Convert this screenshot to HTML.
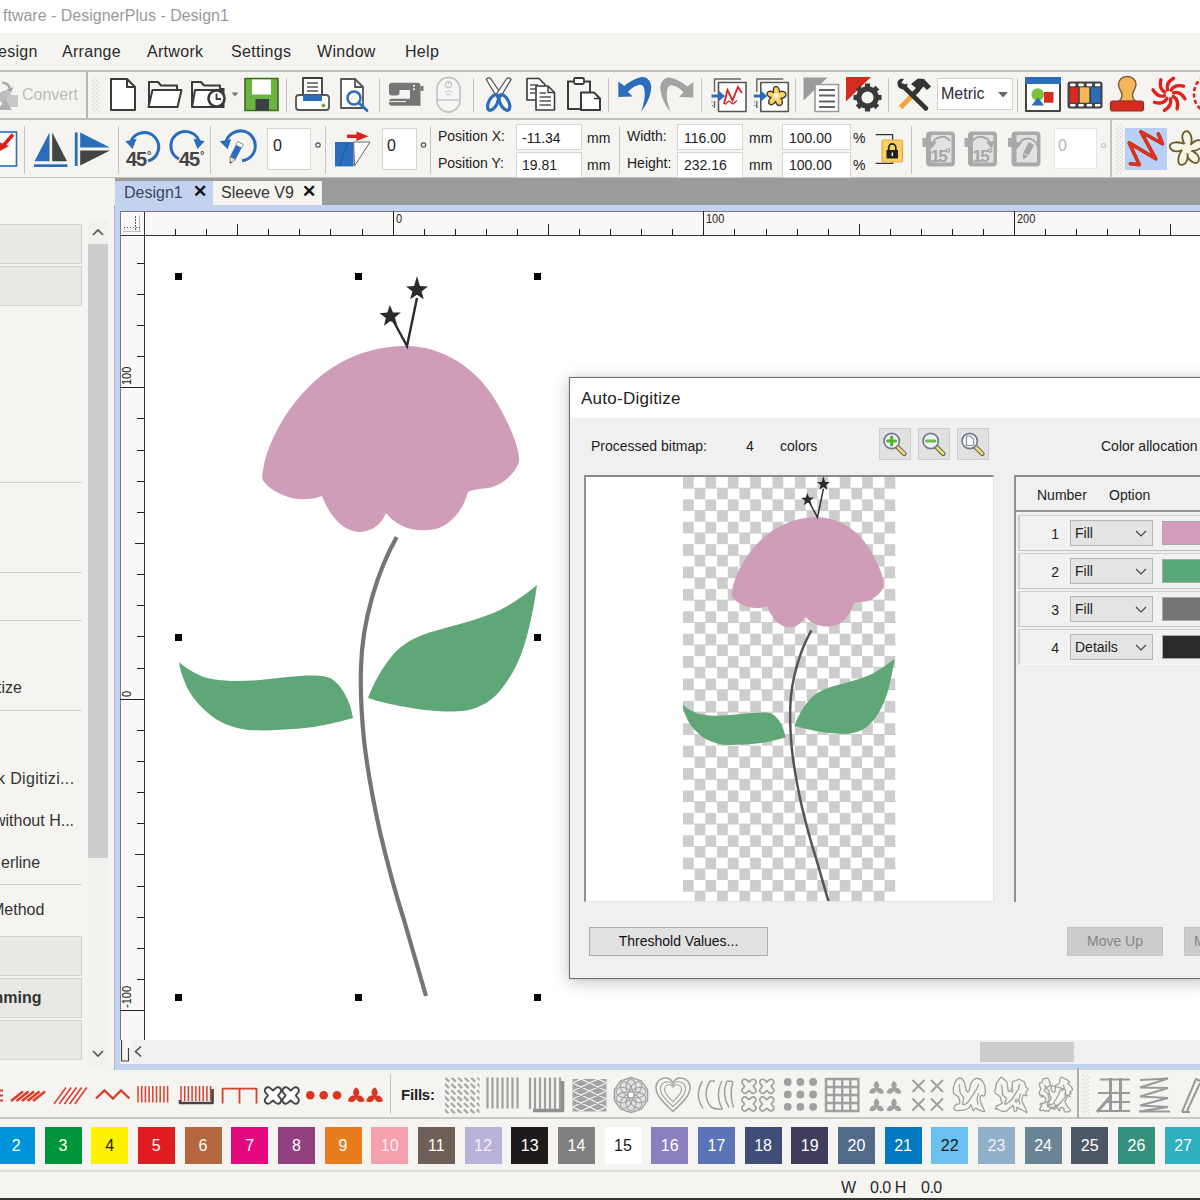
<!DOCTYPE html>
<html><head><meta charset="utf-8">
<style>
*{box-sizing:border-box;margin:0;padding:0}
html,body{width:1200px;height:1200px;overflow:hidden;background:#f5f4f1;font-family:"Liberation Sans",sans-serif;color:#222}
.a{position:absolute}
.t{position:absolute;white-space:nowrap;line-height:1}
#title{left:0;top:0;width:1200px;height:33px;background:#fff}
#menu{left:0;top:33px;width:1200px;height:37px;background:#f5f4f1}
#tb1{left:0;top:70px;width:1200px;height:48px;background:#f5f4f1;border-top:2px solid #c0bfbd}
#tb2{left:0;top:118px;width:1200px;height:60px;background:#f5f4f1;border-top:2px solid #c0bfbd;border-bottom:1.5px solid #c4c3c1}
.vs{position:absolute;width:1px;background:#c4c3c1}
.inp{position:absolute;background:#fff;border:1px solid #d5d5d5}
.lbl{position:absolute;white-space:nowrap;font-size:14px;line-height:1;color:#222}
#left{left:0;top:178px;width:115px;height:890px;background:#f5f4f1}
.gbox{position:absolute;left:0;width:82px;background:#e9e8e5;border:1px solid #d4d3d0;border-left:none}
.hl{position:absolute;left:0;width:82px;height:1px;background:#d0cfcc}
.lt{position:absolute;white-space:nowrap;font-size:16px;line-height:1;color:#333}
#tabs{left:115px;top:178px;width:1085px;height:27px;background:#9b9b9b}
#frame{left:114px;top:205px;width:1086px;height:865px;background:#c3d3ef;border-left:1px solid #a9b8d6}
#canvas{left:145px;top:236px;width:1055px;height:804px;background:#fff}
.hd{position:absolute;width:7px;height:7px;background:#000}
.sw{position:absolute;top:1127px;width:37px;height:37px;color:#fff;font-size:16px;text-align:center;line-height:38px}
svg{position:absolute;overflow:visible}
</style></head><body>
<div id="title" class="a"><div class="t" style="left:3px;top:8px;font-size:16px;color:#9a9a9a">ftware - DesignerPlus - Design1</div></div>
<div id="menu" class="a">
<div class="t" style="left:-2px;top:11px;font-size:16px;color:#2a2a2a;letter-spacing:.3px">esign</div>
<div class="t" style="left:62px;top:11px;font-size:16px;color:#2a2a2a;letter-spacing:.3px">Arrange</div>
<div class="t" style="left:147px;top:11px;font-size:16px;color:#2a2a2a;letter-spacing:.3px">Artwork</div>
<div class="t" style="left:231px;top:11px;font-size:16px;color:#2a2a2a;letter-spacing:.3px">Settings</div>
<div class="t" style="left:317px;top:11px;font-size:16px;color:#2a2a2a;letter-spacing:.3px">Window</div>
<div class="t" style="left:405px;top:11px;font-size:16px;color:#2a2a2a;letter-spacing:.3px">Help</div>
</div>
<div id="tb1" class="a"></div>
<div class="t" style="left:22px;top:87px;font-size:16px;color:#bcbcbc">Convert</div>
<div class="vs" style="left:86px;top:72px;height:46px;width:2px;background:#b8b7b5"></div>
<div class="vs" style="left:286px;top:78px;height:34px"></div>
<div class="vs" style="left:379px;top:78px;height:34px"></div>
<div class="vs" style="left:473px;top:78px;height:34px"></div>
<div class="vs" style="left:608px;top:78px;height:34px"></div>
<div class="vs" style="left:701px;top:78px;height:34px"></div>
<div class="vs" style="left:795px;top:78px;height:34px"></div>
<div class="vs" style="left:888px;top:78px;height:34px"></div>
<div class="vs" style="left:1017px;top:78px;height:34px"></div>
<div class="a" style="left:937px;top:78px;width:76px;height:32px;background:#fff;border:1px solid #d0d0d0"></div>
<div class="t" style="left:941px;top:86px;font-size:16px;color:#2a2a3a">Metric</div>
<svg style="left:0;top:0" width="1200" height="1200" fill="none" stroke-linejoin="round">
<defs><pattern id="grip" width="4" height="4" patternUnits="userSpaceOnUse"><rect x="0" y="0" width="1.2" height="1.2" fill="#d2d1ce"/><rect x="2" y="2" width="1.2" height="1.2" fill="#d2d1ce"/></pattern></defs>
<rect x="91" y="78" width="9" height="34" fill="url(#grip)"/>
<!-- convert (gray) -->
<g fill="#bdbdbd" stroke="none"><circle cx="5" cy="97" r="6.5"/><rect x="7" y="95" width="11" height="12" fill="#c9c9c9"/><path d="M-2 110 L5 99 L12 110 Z" fill="#b0b0b0"/><path d="M2 82 C6 81 10 84 11 88 L13.5 87 L11 93 L6 89.5 L8.5 88.8 C8 86 5 84 2 84 Z" fill="#a8a8a8"/></g>
<!-- new -->
<path d="M111 79 H127 L135 87 V110 H111 Z" fill="#fff" stroke="#3a3a3a" stroke-width="2"/><path d="M127 79 V87 H135" stroke="#3a3a3a" stroke-width="2"/>
<!-- open -->
<path d="M149 106 V82 H158 L161 85.5 H177 V90" stroke="#3a3a3a" stroke-width="2"/><path d="M152.5 90 H181.5 L177.5 107 H148.5 Z" fill="#fff" stroke="#3a3a3a" stroke-width="2"/>
<!-- recent -->
<path d="M192 107 V82 H201 L204 85.5 H220 V89" stroke="#3a3a3a" stroke-width="2"/><path d="M219 88 H224.500 V108 H219 Z" fill="#3a3a3a"/><path d="M195 90 H222 V107 H192 Z" fill="#fff" stroke="#3a3a3a" stroke-width="2"/><circle cx="216.5" cy="98.5" r="8" fill="#fff" stroke="#3a3a3a" stroke-width="2.6"/><path d="M216.5 93.5 V99 H221" stroke="#3a3a3a" stroke-width="1.8"/>
<path d="M231.5 92.5 H238.5 L235 96.5 Z" fill="#777"/>
<!-- save -->
<rect x="245" y="78.5" width="33" height="32" fill="#6cb33f" stroke="#3d6b22" stroke-width="1.6"/><rect x="252" y="79.5" width="19" height="15" fill="#fff"/><rect x="255.500" y="99" width="13.500" height="11.500" fill="#3d3d48"/>
<!-- printer -->
<path d="M303 97 V78 H322 V97" fill="#fff" stroke="#3a3a3a" stroke-width="1.8"/><path d="M307 83 H318 M307 87 H318 M307 91 H318" stroke="#555" stroke-width="1.5"/>
<rect x="296" y="95" width="33" height="15" rx="3" fill="#fff" stroke="#555" stroke-width="1.8"/><rect x="303" y="95" width="19" height="6" fill="#2a6ebb"/><circle cx="323.5" cy="105.5" r="2" fill="#6cb33f"/>
<!-- preview -->
<path d="M341 79 H355 L363 87 V108 H341 Z" fill="#fff" stroke="#555" stroke-width="1.8"/><path d="M355 79 V87 H363" stroke="#555" stroke-width="1.8"/><circle cx="354" cy="98" r="6.5" fill="#fff" stroke="#2a6ebb" stroke-width="2.5"/><path d="M359 103 L367 110.5" stroke="#2a6ebb" stroke-width="3" stroke-linecap="round"/>
<!-- sewing machine -->
<g fill="#767676" stroke="none"><path d="M389 85.500 Q389 82.700 392 82.700 H417.500 Q420.500 82.700 420.500 85.500 V105.700 H410 V90 H399.500 V92.500 Q399.500 95.500 396.500 95.500 H392 Q389 95.500 389 92.500 Z"/><path d="M389 101.500 Q389 98.800 392 98.800 H410 V105.700 H392 Q389 105.700 389 103.300 Z"/><rect x="420.500" y="86" width="3" height="5"/></g><path d="M389 101.600 H406" stroke="#f5f4f1" stroke-width="1"/><circle cx="414" cy="85.800" r="1" fill="#fff"/><circle cx="414" cy="89.300" r="1" fill="#fff"/>
<!-- mouse -->
<rect x="437" y="77.500" width="23" height="34.500" rx="11.500" stroke="#c6c6c6" stroke-width="1.800" fill="#f6f6f5"/><path d="M437 100 H460" stroke="#c6c6c6" stroke-width="1.500"/><circle cx="448.500" cy="84.500" r="3" stroke="#cacaca" stroke-width="1.300"/><path d="M448.500 81 V84.500" stroke="#cacaca" stroke-width="1.200"/><path d="M445 92.500 Q448.500 89.500 452 92.500 M446.500 95 Q448.500 93.500 450.500 95" stroke="#c4c4c4" stroke-width="1.200"/>
<!-- scissors -->
<path d="M486.300 79.500 Q488.500 76.500 491 79 L502 95.500 L497.500 98 Z" fill="#fff" stroke="#555" stroke-width="1.3"/>
<path d="M511.100 79.500 Q508.900 76.500 506.400 79 L495.400 95.500 L499.900 98 Z" fill="#fff" stroke="#555" stroke-width="1.3"/>
<ellipse cx="493" cy="102.500" rx="4.200" ry="8.500" transform="rotate(28 493 102.500)" stroke="#2a6ebb" stroke-width="3.2"/><ellipse cx="504.400" cy="102.500" rx="4.200" ry="8.500" transform="rotate(-28 504.400 102.500)" stroke="#2a6ebb" stroke-width="3.2"/>
<!-- copy -->
<path d="M527 78.500 H539 L545 84.500 V100 H527 Z" fill="#fff" stroke="#3a3a3a" stroke-width="1.6"/><path d="M530 85 H538 M530 89 H541 M530 93 H535" stroke="#555" stroke-width="1.4"/>
<path d="M536 86 H548 L554.500 92.500 V110 H536 Z" fill="#fff" stroke="#3a3a3a" stroke-width="1.6"/><path d="M548 86 V92.500 H554.500" stroke="#3a3a3a" stroke-width="1.4"/><path d="M539.500 93 H546 M539.500 97 H551 M539.500 101 H551 M539.500 105 H551" stroke="#555" stroke-width="1.4"/>
<!-- paste -->
<path d="M574 81.500 H568 V109 H581" stroke="#3a3a3a" stroke-width="2"/><path d="M584 81.500 H590 V92" stroke="#3a3a3a" stroke-width="2"/><rect x="574" y="78" width="10" height="6" rx="1.500" fill="#fff" stroke="#3a3a3a" stroke-width="1.8"/>
<path d="M581 92.500 H594 L600 98.500 V110 H581 Z" fill="#fff" stroke="#3a3a3a" stroke-width="2"/><path d="M594 98.500 H600" stroke="#3a3a3a" stroke-width="1.6"/>
<!-- undo -->
<path d="M618.300 81.600 L624.300 86.100 C628.800 82 635.500 78.300 642.300 77.100 C647.500 77 651.300 82 651.300 87.300 C651 96.300 646 105.300 641.100 112 C644 103 646 94.800 644 88 C643 85 641 84.300 638 85.200 C634.800 85.800 631 88.500 628 91.800 L632.500 96.600 L618.300 97 Z" fill="#2a6ebb"/>
<!-- redo -->
<path d="M618.300 81.600 L624.300 86.100 C628.800 82 635.500 78.300 642.300 77.100 C647.500 77 651.300 82 651.300 87.300 C651 96.300 646 105.300 641.100 112 C644 103 646 94.800 644 88 C643 85 641 84.300 638 85.200 C634.800 85.800 631 88.500 628 91.800 L632.500 96.600 L618.300 97 Z" fill="#a3a3a3" transform="translate(1311.600 0.500) scale(-1 1)"/>
<!-- import stitch -->
<g id="impf"><path d="M714.500 92 V79 H741" stroke="#666" stroke-width="1.4"/><path d="M714.500 101 V108" stroke="#666" stroke-width="1.4"/><rect x="718.500" y="82.500" width="27.500" height="29" fill="#fff" stroke="#555" stroke-width="1.6"/><path d="M711.500 96 H720" stroke="#2a6ebb" stroke-width="3"/><path d="M718.500 90.500 L725 96 L718.500 101.500 Z" fill="#2a6ebb"/><path d="M712 101.500 v1 M712.500 105 v1" stroke="#2a6ebb" stroke-width="1.2"/></g>
<path d="M724 104 L727.500 90 L732.500 100.500 L738 87 L742 93" stroke="#d8231c" stroke-width="1.8" stroke-linejoin="miter"/>
<path d="M725 104.500 L729 101 L733 104 L737 100.500" stroke="#d8231c" stroke-width="1.2"/>
<use href="#impf" x="42.300"/>
<path d="M775.700 86.500 C778.500 86.500 779.500 90 779.500 92 C782 90.500 786 91.500 786 94.500 C786 97.500 782.500 98.500 781 98.500 C783 101 783 105 780 105.500 C777.500 106 776 103 775.500 101.500 C774.500 103.500 771.500 106 769.500 104 C767.500 102 769.500 98.500 771 97.500 C768.500 97 766 94.500 767.500 92.500 C769 90.500 772 91.500 773.500 92.500 C773 90 773.500 86.500 775.700 86.500 Z" fill="#f6d36b" stroke="#4a3a20" stroke-width="1.4"/><circle cx="776" cy="96" r="2.500" fill="#fff7d8"/>
<!-- gray tri + list -->
<path d="M803.500 77.500 H827.500 L803.500 100.500 Z" fill="#9c9c9c"/><rect x="815" y="84.500" width="23.500" height="27" fill="#fff" stroke="#9a9a9a" stroke-width="1.6"/><path d="M819 90 H835 M819 95.500 H835 M819 101.500 H835 M819 107 H835" stroke="#666" stroke-width="2.2"/>
<!-- red tri + gear -->
<path d="M846 77 H871 L846 101.500 Z" fill="#d62b1f"/>
<g transform="translate(867.500 97.500)"><circle r="8.700" stroke="#3a3a3a" stroke-width="5.200" fill="none"/><g fill="#3a3a3a"><rect x="-2.600" y="-14" width="5.200" height="5"/><rect x="-2.600" y="9" width="5.200" height="5"/><rect x="-14" y="-2.600" width="5" height="5.200"/><rect x="9" y="-2.600" width="5" height="5.200"/><g transform="rotate(45)"><rect x="-2.600" y="-14" width="5.200" height="5"/><rect x="-2.600" y="9" width="5.200" height="5"/><rect x="-14" y="-2.600" width="5" height="5.200"/><rect x="9" y="-2.600" width="5" height="5.200"/></g></g></g>
<!-- tools -->
<path d="M900.500 107.500 L915 93" stroke="#f0a63c" stroke-width="5" stroke-linecap="butt"/>
<path d="M912 95.500 L918.500 89" stroke="#333" stroke-width="5"/>
<path d="M911 84 L918 78.500 L924 79 L931 86.500 L927 90 L923.500 86.500 L919.500 91 Z" fill="#333"/>
<path d="M903 86 L926 108.500" stroke="#333" stroke-width="4.600" stroke-linecap="round"/>
<path d="M897.500 84 C897 80 900.500 78 904 79 L901.500 82.500 L903.500 85 L907.500 83.500 C908 87 905 90 901.500 89 C899 88.500 897.700 86.500 897.500 84 Z" fill="#333"/>
<!-- metric arrow -->
<path d="M998 92 H1008 L1003 97.500 Z" fill="#666"/>
<!-- window icon -->
<rect x="1026" y="78" width="34" height="33" fill="#fff" stroke="#444" stroke-width="2"/><rect x="1025" y="77" width="36" height="7" fill="#2a6ebb"/>
<circle cx="1037.700" cy="94.500" r="6.300" fill="#7dc142"/><rect x="1044" y="92" width="9.500" height="10.700" fill="#d62b1f"/><path d="M1031.400 105.600 H1044 L1038 97.500 Z" fill="#2a6ebb"/>
<!-- film -->
<rect x="1067.500" y="81.500" width="35" height="27" rx="2.500" fill="#444"/>
<rect x="1069.800" y="87.400" width="8.400" height="15.300" fill="#d62b1f"/><rect x="1079.800" y="87.400" width="9.400" height="15.300" fill="#f5b75a"/><rect x="1091.300" y="87.400" width="9.200" height="15.300" fill="#2a6ebb"/>
<g fill="#fff"><rect x="1070" y="83.500" width="5.500" height="2.700" rx="1"/><rect x="1078.300" y="83.500" width="5.500" height="2.700" rx="1"/><rect x="1086.600" y="83.500" width="5.500" height="2.700" rx="1"/><rect x="1094.900" y="83.500" width="5.500" height="2.700" rx="1"/><rect x="1070" y="103.900" width="5.500" height="2.700" rx="1"/><rect x="1078.300" y="103.900" width="5.500" height="2.700" rx="1"/><rect x="1086.600" y="103.900" width="5.500" height="2.700" rx="1"/><rect x="1094.900" y="103.900" width="5.500" height="2.700" rx="1"/></g>
<!-- stamp -->
<path d="M1127.200 76.500 C1133 76.500 1136 80.500 1136 84.500 C1136 89 1132.500 91 1132.500 95 C1132.500 98 1134 100 1136 101.500 H1118.500 C1120.500 100 1122 98 1122 95 C1122 91 1118.500 89 1118.500 84.500 C1118.500 80.500 1121.500 76.500 1127.200 76.500 Z" fill="#f5b75a" stroke="#7a5a30" stroke-width="1.400"/>
<rect x="1110.500" y="101" width="33" height="10" rx="2.500" fill="#d62b1f" stroke="#8a3022" stroke-width="1.200"/>
<!-- swirl -->
<g transform="translate(1169 94.300)" stroke="#e0201c" stroke-width="3.400" stroke-linecap="round" fill="none">
<path id="arm" d="M-1.500 -4.500 C-2.500 -8.500 -0.500 -13 4.500 -16"/><use href="#arm" transform="rotate(45)"/><use href="#arm" transform="rotate(90)"/><use href="#arm" transform="rotate(135)"/><use href="#arm" transform="rotate(180)"/><use href="#arm" transform="rotate(225)"/><use href="#arm" transform="rotate(270)"/><use href="#arm" transform="rotate(315)"/></g>
<ellipse cx="1205" cy="94" rx="11" ry="16" stroke="#e0201c" stroke-width="2.600" stroke-dasharray="4 2.500"/>
</svg>
<div id="tb2" class="a"></div>
<div class="vs" style="left:24px;top:126px;height:48px"></div>
<div class="vs" style="left:118px;top:126px;height:48px"></div>
<div class="vs" style="left:210px;top:126px;height:48px"></div>
<div class="vs" style="left:325px;top:126px;height:48px"></div>
<div class="vs" style="left:430px;top:126px;height:48px"></div>
<div class="vs" style="left:619px;top:126px;height:48px"></div>
<div class="vs" style="left:911px;top:126px;height:48px"></div>
<div class="vs" style="left:1110px;top:120px;height:58px;width:2px"></div>
<div class="inp" style="left:267px;top:128px;width:44px;height:42px"></div><div class="t" style="left:273px;top:138px;font-size:16px;color:#222">0</div>
<div class="inp" style="left:382px;top:128px;width:35px;height:42px"></div><div class="t" style="left:387px;top:138px;font-size:16px;color:#222">0</div>
<div class="lbl" style="left:438px;top:129px">Position X:</div><div class="lbl" style="left:438px;top:156px">Position Y:</div>
<div class="inp" style="left:516px;top:124px;width:66px;height:26px"></div><div class="inp" style="left:516px;top:152px;width:66px;height:26px"></div>
<div class="lbl" style="left:522px;top:131px">-11.34</div><div class="lbl" style="left:522px;top:158px">19.81</div>
<div class="lbl" style="left:587px;top:131px">mm</div><div class="lbl" style="left:587px;top:158px">mm</div>
<div class="lbl" style="left:627px;top:129px">Width:</div><div class="lbl" style="left:627px;top:156px">Height:</div>
<div class="inp" style="left:677px;top:124px;width:66px;height:26px"></div><div class="inp" style="left:677px;top:152px;width:66px;height:26px"></div>
<div class="lbl" style="left:684px;top:131px">116.00</div><div class="lbl" style="left:684px;top:158px">232.16</div>
<div class="lbl" style="left:749px;top:131px">mm</div><div class="lbl" style="left:749px;top:158px">mm</div>
<div class="inp" style="left:782px;top:124px;width:69px;height:26px"></div><div class="inp" style="left:782px;top:152px;width:69px;height:26px"></div>
<div class="lbl" style="left:789px;top:131px">100.00</div><div class="lbl" style="left:789px;top:158px">100.00</div>
<div class="lbl" style="left:853px;top:131px">%</div><div class="lbl" style="left:853px;top:158px">%</div>
<div class="inp" style="left:1054px;top:128px;width:43px;height:41px;border-color:#e6e6e6"></div><div class="t" style="left:1058px;top:138px;font-size:16px;color:#b5b5b5">0</div>
<div class="a" style="left:1124.500px;top:127.500px;width:42.500px;height:42.500px;background:#b8d0f5"></div>
<svg style="left:0;top:0" width="1200" height="1200" fill="none">
<rect x="1115" y="124" width="8" height="50" fill="url(#grip)"/>
<!-- partial icon -->
<rect x="-5" y="132" width="21.500" height="34" fill="#fff" stroke="#2a6ebb" stroke-width="1.600"/><path d="M13 134.500 L3 146" stroke="#d8231c" stroke-width="3.500"/><path d="M-1 142 L9 146 L0 151 Z" fill="#d8231c"/>
<!-- mirror h -->
<path d="M34.500 161.200 H49.500 V132.500 Z" fill="#2a6ebb"/><path d="M52.200 132.500 V161.200 H67 Z" fill="#444"/><rect x="34" y="164.300" width="33.500" height="2.700" fill="#2a6ebb"/>
<!-- mirror v -->
<rect x="74.800" y="132.500" width="2.800" height="33.500" fill="#2a6ebb"/><path d="M80.200 132.500 V147.600 H110 Z" fill="#2a6ebb"/><path d="M80.200 150.400 H110 L80.200 165.500 Z" fill="#444"/>
<!-- rot ccw 45 -->
<path d="M131 141 A14.500 14.500 0 1 1 148 161" stroke="#2a6ebb" stroke-width="3"/><path d="M126 140 L137.500 140 L131.500 149 Z" fill="#2a6ebb" transform="rotate(-12 131.500 144)"/>
<!-- rot cw 45 -->
<path d="M199 141 A14.500 14.500 0 1 0 179 159" stroke="#2a6ebb" stroke-width="3"/><path d="M192.500 140 L204 140 L198.500 149 Z" fill="#2a6ebb" transform="rotate(12 198.500 144)"/>
<!-- rot free -->
<path d="M226 141.500 A15 15 0 1 1 242 160.800" stroke="#2a6ebb" stroke-width="3"/><path d="M220.500 140 L232 140.500 L226.500 149.500 Z" fill="#2a6ebb" transform="rotate(-12 226 144)"/>
<g transform="translate(240.500 143) rotate(27)"><rect x="-3.200" y="0" width="6.400" height="4" fill="#fff" stroke="#888" stroke-width=".8"/><rect x="-3.200" y="4" width="6.400" height="13" fill="#2a6ebb"/><path d="M-3.200 17 H3.200 L0 23 Z" fill="#f1e3c8" stroke="#777" stroke-width=".7"/><path d="M-1 21 L1 21 L0 23 Z" fill="#333"/></g>
<circle cx="318" cy="145" r="2.200" stroke="#555" stroke-width="1.200"/><circle cx="423.500" cy="145" r="2.200" stroke="#555" stroke-width="1.200"/><circle cx="1103.600" cy="145.500" r="2" stroke="#c4c4c4" stroke-width="1.100"/>
<!-- skew -->
<rect x="335" y="142" width="18.600" height="24.400" fill="#2a6ebb"/><path d="M348 142 L339.500 166" stroke="#1f56a0" stroke-width="1"/><path d="M353.600 142 H370 L354.500 166 Z" fill="#fff" stroke="#666" stroke-width="1"/><path d="M347 136.300 H358" stroke="#d8231c" stroke-width="3.500"/><path d="M356.500 131.500 L368.500 136.300 L356.500 141 Z" fill="#d8231c"/>
<!-- lock -->
<path d="M875.600 134.600 H892.600 V140 M875.600 163.400 H892.600 V161" stroke="#333" stroke-width="1.300"/><rect x="882" y="140" width="20.500" height="22" rx="1.500" fill="#fbd062" stroke="#e3ab3c" stroke-width="1.200"/><rect x="886.500" y="150" width="11.500" height="8.500" fill="#222"/><path d="M888.700 150 V147.500 A3.500 3.500 0 0 1 895.800 147.500 V150" stroke="#222" stroke-width="1.700"/><rect x="891.600" y="152.500" width="1.400" height="3.500" fill="#fff"/>
<!-- gray disabled icons -->
<g id="gbx"><path d="M930 131.500 H951 Q955 131.500 955 135.500 V162.500 Q955 166.500 951 166.500 H930 Q926 166.500 926 162.500 V147 H922.500 V138 H926 V135.500 Q926 131.500 930 131.500 Z" fill="#a9a9a9"/><rect x="931" y="135" width="20.500" height="27.500" rx="1.500" fill="#e2e2e2"/></g>
<use href="#gbx" x="42"/><use href="#gbx" x="85.500"/>
<path d="M933 145 A9 7.500 0 0 1 950 141" stroke="#a6a6a6" stroke-width="2"/><path d="M928.500 141 L937 142 L931.500 148.500 Z" fill="#a6a6a6"/>
<path d="M973 141 A9 7.500 0 0 1 990 145" stroke="#a6a6a6" stroke-width="2"/><path d="M986 142 L994.500 141 L991.500 148.500 Z" fill="#a6a6a6"/>
<path d="M1018 146 A10 9.500 0 0 1 1037.500 146" stroke="#a6a6a6" stroke-width="2"/><path d="M1013.500 142 L1022 143 L1016.500 149.500 Z" fill="#a6a6a6"/>
<g transform="translate(1031.500 143.500) rotate(28)"><rect x="-3" y="0" width="6" height="12" fill="#a6a6a6"/><path d="M-3 13 H3 L0 18 Z" fill="#a6a6a6"/></g>
<circle cx="948" cy="150.500" r="1.700" stroke="#a6a6a6" stroke-width="1.300"/><circle cx="990" cy="150.500" r="1.700" stroke="#a6a6a6" stroke-width="1.300"/>
<!-- zigzag selected -->
<path d="M1130.400 163.800 L1139.200 164.600 L1129.200 142.900 L1155.800 158.800 L1140.800 131.700 L1162.500 143.800 L1158.300 133.800" stroke="#b52a18" stroke-width="3.600" stroke-linejoin="round" stroke-linecap="round"/>
<path d="M1130.400 163.800 L1139.200 164.600 L1129.200 142.900 L1155.800 158.800 L1140.800 131.700 L1162.500 143.800 L1158.300 133.800" stroke="#e8301c" stroke-width="2.400" stroke-linejoin="round" stroke-linecap="round"/>
<!-- flower icon -->
<g transform="translate(1187 148.500)"><path id="fp" d="M0 -2 C-5 -6 -6.500 -14 -2 -17 C2.500 -19 6 -12 4 -3 Z" fill="#f8f4e4" stroke="#6b5a2e" stroke-width="1.800"/><use href="#fp" transform="rotate(72)"/><use href="#fp" transform="rotate(144)"/><use href="#fp" transform="rotate(203)"/><use href="#fp" transform="rotate(280)"/><circle r="5" fill="#f8f4e4"/></g>
</svg>
<div class="t" style="left:126px;top:148.500px;font-size:20px;font-weight:bold;color:#444;letter-spacing:-1.200px">45</div><div class="t" style="left:147px;top:149.500px;font-size:11px;font-weight:bold;color:#444">°</div>
<div class="t" style="left:179px;top:148.500px;font-size:20px;font-weight:bold;color:#444;letter-spacing:-1.200px">45</div><div class="t" style="left:200px;top:149.500px;font-size:11px;font-weight:bold;color:#444">°</div>
<div class="t" style="left:930.500px;top:148px;font-size:17px;font-weight:bold;color:#a6a6a6;letter-spacing:-1.600px">15</div>
<div class="t" style="left:972.500px;top:148px;font-size:17px;font-weight:bold;color:#a6a6a6;letter-spacing:-1.600px">15</div>
<div id="left" class="a">
<div class="gbox" style="top:46px;height:40px"></div>
<div class="gbox" style="top:88px;height:40px"></div>
<div class="hl" style="top:304px"></div>
<div class="hl" style="top:394px"></div>
<div class="hl" style="top:442px"></div>
<div class="hl" style="top:532px"></div>
<div class="hl" style="top:706px"></div>
<div class="lt" style="left:-3px;top:502px">tize</div>
<div class="lt" style="left:-3px;top:593px;letter-spacing:.35px">k Digitizi...</div>
<div class="lt" style="left:-6px;top:635px">without H...</div>
<div class="lt" style="left:1px;top:677px">erline</div>
<div class="lt" style="left:-9px;top:724px">Method</div>
<div class="gbox" style="top:758px;height:40px"></div>
<div class="gbox" style="top:800px;height:40px"></div>
<div class="lt" style="left:-11px;top:812px;font-weight:bold">mming</div>
<div class="gbox" style="top:842px;height:40px"></div>
<!-- scrollbar -->
<div class="a" style="left:88px;top:42px;width:20px;height:846px;background:#f1f0ee"></div>
<div class="a" style="left:88px;top:66px;width:20px;height:614px;background:#cdcdcd"></div>
<svg style="left:91px;top:49px" width="14" height="10"><path d="M2 8 L7 3 L12 8" fill="none" stroke="#555" stroke-width="1.6"/></svg>
<svg style="left:91px;top:871px" width="14" height="10"><path d="M2 2 L7 7 L12 2" fill="none" stroke="#555" stroke-width="1.6"/></svg>
</div>
<div id="tabs" class="a">
<div class="a" style="left:0;top:3px;width:98px;height:24px;background:#c3d3ef"></div>
<div class="a" style="left:98px;top:3px;width:109px;height:24px;background:#f6f4ef"></div>
<div class="t" style="left:9px;top:7px;font-size:16px;color:#3a4560">Design1</div>
<div class="t" style="left:78px;top:5px;font-size:17px;color:#111;font-weight:bold">✕</div>
<div class="t" style="left:106px;top:7px;font-size:16px;color:#333">Sleeve V9</div>
<div class="t" style="left:187px;top:5px;font-size:17px;color:#111;font-weight:bold">✕</div>
</div>
<div id="frame" class="a"></div>
<div id="canvas" class="a"></div>
<div class="a" style="left:120px;top:211px;width:1080px;height:25px;background:#f9f8f6"></div>
<div class="a" style="left:120px;top:211px;width:25px;height:853px;background:#f9f8f6"></div>
<svg style="left:0;top:0" width="1200" height="1200" shape-rendering="crispEdges">
<path d="M144.5 212 V1040 M120 235.5 H1200" stroke="#333" stroke-width="1.4" fill="none"/>
<path d="M120 211.5 H1200 M120.5 211 V1064" stroke="#7a7a7a" stroke-width="1" fill="none"/>
<path d="M123 231.5 H140.5 M139.5 215 V232" stroke="#bbb" stroke-width="1" fill="none"/>
<path d="M123.5 227.5 H140 M135.5 216 V231" stroke="#555" stroke-width="1" stroke-dasharray="1.5 1.5" fill="none"/>
<path d="M175.5 229.0 V235 M206.5 229.0 V235 M237.5 224.0 V235 M268.5 229.0 V235 M299.5 229.0 V235 M330.5 229.0 V235 M362.5 229.0 V235 M393.5 211.0 V235 M424.5 229.0 V235 M455.5 229.0 V235 M486.5 229.0 V235 M517.5 229.0 V235 M548.5 224.0 V235 M579.5 229.0 V235 M610.5 229.0 V235 M641.5 229.0 V235 M672.5 229.0 V235 M703.5 211.0 V235 M734.5 229.0 V235 M766.5 229.0 V235 M797.5 229.0 V235 M828.5 229.0 V235 M859.5 224.0 V235 M890.5 229.0 V235 M921.5 229.0 V235 M952.5 229.0 V235 M983.5 229.0 V235 M1014.5 211.0 V235 M1045.5 229.0 V235 M1076.5 229.0 V235 M1107.5 229.0 V235 M1139.5 229.0 V235 M1170.5 224.0 V235 " stroke="#222" stroke-width="1" fill="none"/>
<path d="M137.0 263.5 H144 M137.0 294.5 H144 M137.0 325.5 H144 M137.0 356.5 H144 M120.0 387.5 H144 M137.0 418.5 H144 M137.0 450.5 H144 M137.0 481.5 H144 M137.0 512.5 H144 M135.0 543.5 H144 M137.0 574.5 H144 M137.0 605.5 H144 M137.0 636.5 H144 M137.0 668.5 H144 M120.0 699.5 H144 M137.0 730.5 H144 M137.0 761.5 H144 M137.0 792.5 H144 M137.0 823.5 H144 M135.0 854.5 H144 M137.0 886.5 H144 M137.0 917.5 H144 M137.0 948.5 H144 M137.0 979.5 H144 M120.0 1010.5 H144 " stroke="#222" stroke-width="1" fill="none"/>
</svg>
<div class="t" style="left:396px;top:213px;font-size:11px;color:#222;transform:scaleY(1.12);transform-origin:0 0">0</div>
<div class="t" style="left:706px;top:213px;font-size:11px;color:#222;transform:scaleY(1.12);transform-origin:0 0">100</div>
<div class="t" style="left:1017px;top:213px;font-size:11px;color:#222;transform:scaleY(1.12);transform-origin:0 0">200</div>
<div class="t" style="left:120.5px;top:385px;font-size:11px;color:#222;transform-origin:0 0;transform:rotate(-90deg) scaleY(1.12)">100</div>
<div class="t" style="left:120.5px;top:697px;font-size:11px;color:#222;transform-origin:0 0;transform:rotate(-90deg) scaleY(1.12)">0</div>
<div class="t" style="left:120.5px;top:1008px;font-size:11px;color:#222;transform-origin:0 0;transform:rotate(-90deg) scaleY(1.12)">-100</div>
<svg style="left:0;top:0" width="1200" height="1200">
<defs>
<g id="fl">
<path d="M263 470 C268 436 300 380 350 358 C372 348 392 346 406 346 C440 346 478 366 500 408 C512 430 520 450 519 462 C514 476 500 486 488 488 C478 489 472 490 468 492 C462 514 446 530 428 530 C410 532 394 524 386 513 C382 524 372 532 358 532 C340 530 328 512 322 496 C312 500 300 500 292 498 C280 495 268 488 263.500 481 C261.500 478 262 474 263 470 Z" fill="#cf9db8"/>
<path d="M396.7 537 C378 570 362 620 361 668 C360 700 362 720 364 740 C368 775 374 805 380 832 C388 866 396 895 404 920 C412 948 420 975 426 996" fill="none" stroke="currentColor" stroke-width="4.2" stroke-linecap="butt"/>
<path d="M179 662 C188 670 200 677 212 679 C230 682 245 681 260 680 C280 678 300 675 316 675.5 C324 676 329 677 332 679 C342 686 350 700 353 718 C336 723 318 727 300 728.5 C282 730 264 731 248 730 C232 728 218 722 208 713 C196 703 188 692 184 680 C181 673 180 668 179 662 Z" fill="#5fa777"/>
<path d="M537 585 C526 594 514 603 500 610 C487 616 474 620 460 624 C446 628 432 631 420 636 C408 641 398 648 392 656 C382 668 374 682 368 698 C380 702 390 704 400 706 C415 709 430 711 444 711.5 C458 712 470 711 480 706 C492 701 500 692 508 680 C518 665 524 648 528 632 C532 616 535 600 537 585 Z" fill="#5fa777"/>
<path d="M417 298 L407 346 L394 322" fill="none" stroke="#2b2b2b" stroke-width="2.4" stroke-linejoin="miter"/>
<path id="st" d="M0 -14 L2.9 -3.9 L10.9 -3.6 L4.6 1.5 L6.8 9.3 L0 4.8 L-6.8 9.3 L-4.6 1.5 L-10.9 -3.6 L-2.9 -3.9 Z" fill="#2b2b2b" transform="translate(417 290)"/>
<path d="M0 -11.5 L2.9 -3.9 L10.9 -3.6 L4.6 1.5 L6.8 9.3 L0 4.8 L-6.8 9.3 L-4.6 1.5 L-10.9 -3.6 L-2.9 -3.9 Z" fill="#2b2b2b" transform="translate(390.3 316.3) rotate(-2) scale(0.98)"/>
</g>
</defs>
<use href="#fl" style="color:#757575"/>
</svg>
<div class="hd" style="left:175px;top:273px"></div><div class="hd" style="left:355px;top:273px"></div><div class="hd" style="left:534px;top:273px"></div>
<div class="hd" style="left:175px;top:634px"></div><div class="hd" style="left:534px;top:634px"></div>
<div class="hd" style="left:175px;top:994px"></div><div class="hd" style="left:355px;top:994px"></div><div class="hd" style="left:534px;top:994px"></div>
<!-- scrollbar bottom -->
<div class="a" style="left:120px;top:1040px;width:1080px;height:24px;background:#f0f0f0"></div>
<div class="a" style="left:980px;top:1042px;width:94px;height:20px;background:#cdcdcd"></div>
<div class="a" style="left:120px;top:1040px;width:12px;height:24px;background:#f6f5f1"></div>
<svg style="left:0;top:0" width="1200" height="1200"><path d="M121.5 1040 V1061 H128.5 V1048" fill="none" stroke="#444" stroke-width="1.2"/><path d="M141 1046.5 L135.5 1051.5 L141 1056.5" fill="none" stroke="#444" stroke-width="1.5"/></svg>
<!-- DIALOG -->
<div class="a" style="left:569px;top:377px;width:641px;height:602px;background:#f0f0f0;border:1px solid #707070;box-shadow:0 3px 16px rgba(0,0,0,.24), 0 0 2px rgba(0,0,0,.15)">
 <div class="a" style="left:0;top:0;width:641px;height:40px;background:#fff"></div>
 <div class="t" style="left:11px;top:12px;font-size:17px;color:#222;letter-spacing:.25px">Auto-Digitize</div>
 <div class="lbl" style="left:21px;top:61px">Processed bitmap:</div>
 <div class="lbl" style="left:176px;top:61px">4</div>
 <div class="lbl" style="left:210px;top:61px">colors</div>
 <div class="lbl" style="left:531px;top:61px">Color allocation</div>
</div>
<!-- zoom buttons -->
<div class="a zb" style="left:879px;top:428px"></div>
<div class="a zb" style="left:918px;top:428px"></div>
<div class="a zb" style="left:957px;top:428px"></div>
<style>.zb{width:32px;height:32px;background:#e1e1e1;border:1px solid #cdcdcd}
.cb{position:absolute;left:1070px;width:83px;height:26px;background:#e4e4e4;border:1px solid #b5b5b5}
.cb span{position:absolute;left:4px;top:5px;font-size:14px;line-height:1;color:#222}
.row{position:absolute;left:1018px;width:190px;height:36px;background:#f1f1f1;border-top:1px solid #d0d0d0;border-left:2px solid #cfcfcf;border-bottom:1px solid #c2c2c2}
.num{position:absolute;width:20px;left:1039px;text-align:right;font-size:14px;line-height:1;color:#222}
.cs{position:absolute;left:1162px;width:50px;height:24px;border:1px solid #a8a8a8}
.btn{position:absolute;height:29px;font-size:14px;line-height:27px;text-align:center}
</style>
<svg style="left:0;top:0" width="1200" height="1200" fill="none">
<g id="mag"><path d="M897 446.500 L904.300 453.800" stroke="#6b6440" stroke-width="4.600" stroke-linecap="round"/><path d="M897.300 446.800 L904.200 453.700" stroke="#efe08a" stroke-width="2.600" stroke-linecap="round"/><circle cx="891.700" cy="441" r="7.700" fill="#eef2fb" stroke="#767a8c" stroke-width="1.700"/></g>
<use href="#mag" x="39"/><use href="#mag" x="78"/>
<path d="M887.700 441 H895.700 M891.700 437 V445" stroke="#58b32c" stroke-width="3.200" stroke-linecap="round"/>
<path d="M926.500 441 H935" stroke="#6cbb45" stroke-width="3" stroke-linecap="round"/>
<path d="M966.500 436 H970.500 L973.500 439 V445.500 H966.500 Z" fill="#fff" stroke="#8e93a8" stroke-width="1.200"/>
</svg>
<!-- preview box -->
<div class="a" style="left:584px;top:475px;width:410px;height:427px;background:#fff;border:1px solid #8a8a8a;border-top:2px solid #8a8a8a;border-left:2px solid #909090;border-right:1px solid #e5e5e5;border-bottom:1px solid #e5e5e5;overflow:hidden">
 <div class="a" style="left:96.5px;top:0;width:213px;height:430px;background:repeating-conic-gradient(#fff 0% 25%,#cdcdcd 0% 50%) 0 0/22.4px 22.4px"></div>
 <svg style="left:-586px;top:-477px" width="1200" height="1200"><g transform="translate(682.5 476.5) scale(0.592) translate(-179 -277)"><use href="#fl" style="color:#555"/></g></svg>
</div>
<!-- list box -->
<div class="a" style="left:1014px;top:475px;width:200px;height:427px;background:#f0f0f0;border-top:2px solid #8a8a8a;border-left:2px solid #909090"></div>
<div class="lbl" style="left:1037px;top:488px">Number</div>
<div class="lbl" style="left:1109px;top:488px">Option</div>
<div class="a" style="left:1016px;top:510px;width:190px;height:2px;background:#959595"></div>
<div class="row" style="top:515px"></div><div class="row" style="top:553px"></div><div class="row" style="top:591px"></div><div class="row" style="top:629px;border-bottom:1px solid #fbfbfb"></div>
<div class="num" style="top:527px">1</div><div class="num" style="top:565px">2</div><div class="num" style="top:603px">3</div><div class="num" style="top:641px">4</div>
<div class="cb" style="top:520px"><span>Fill</span></div><div class="cb" style="top:558px"><span>Fill</span></div><div class="cb" style="top:596px"><span>Fill</span></div><div class="cb" style="top:634px"><span>Details</span></div>
<svg style="left:0;top:0" width="1200" height="1200"><path d="M1136 531 l5 5 l5 -5 M1136 569 l5 5 l5 -5 M1136 607 l5 5 l5 -5 M1136 645 l5 5 l5 -5" fill="none" stroke="#444" stroke-width="1.2"/></svg>
<div class="cs" style="top:521px;background:#d49dbb"></div><div class="cs" style="top:559px;background:#5aa878"></div><div class="cs" style="top:597px;background:#757575"></div><div class="cs" style="top:635px;background:#2a2a2a"></div>
<!-- buttons -->
<div class="btn" style="left:589px;top:927px;width:179px;background:#e1e1e1;border:1px solid #adadad;color:#111">Threshold Values...</div>
<div class="btn" style="left:1067px;top:927px;width:96px;background:#cccccc;border:1px solid #c4c4c4;color:#858585">Move Up</div>
<div class="btn" style="left:1184px;top:927px;width:96px;background:#cccccc;border:1px solid #c4c4c4;color:#858585;text-align:left;padding-left:9px">Move Down</div>
<div class="a" style="left:0;top:1070px;width:1200px;height:49px;background:#f5f4f1;border-bottom:2px solid #c9c8c6"></div>
<div class="a" style="left:0;top:1120px;width:1200px;height:52px;background:#f5f4f1;border-bottom:2px solid #dcdbd9"></div>
<div class="a" style="left:0;top:1172px;width:1200px;height:28px;background:#f5f4f1"></div>
<div class="a" style="left:0;top:1198px;width:1200px;height:2px;background:#333"></div>
<div class="sw" style="left:-2.2px;background:#0095da;color:#fff">2</div>
<div class="sw" style="left:44.5px;background:#00953b;color:#fff">3</div>
<div class="sw" style="left:91.2px;background:#fff200;color:#1a1a1a">4</div>
<div class="sw" style="left:137.8px;background:#e11b22;color:#fff">5</div>
<div class="sw" style="left:184.5px;background:#b5673f;color:#fff">6</div>
<div class="sw" style="left:231.2px;background:#e5097f;color:#fff">7</div>
<div class="sw" style="left:277.9px;background:#92407f;color:#fff">8</div>
<div class="sw" style="left:324.5px;background:#e87d1e;color:#fff">9</div>
<div class="sw" style="left:371.2px;background:#f4a0ad;color:#fbeef2">10</div>
<div class="sw" style="left:417.9px;background:#6e5f58;color:#fff">11</div>
<div class="sw" style="left:464.5px;background:#b9b3d9;color:#fbeef2">12</div>
<div class="sw" style="left:511.2px;background:#1e1a1a;color:#fff">13</div>
<div class="sw" style="left:557.9px;background:#808080;color:#fff">14</div>
<div class="sw" style="left:604.5px;background:#ffffff;color:#1a1a1a">15</div>
<div class="sw" style="left:651.2px;background:#8b7fbf;color:#fff">16</div>
<div class="sw" style="left:697.9px;background:#5b74b5;color:#fff">17</div>
<div class="sw" style="left:744.6px;background:#3f4e78;color:#fff">18</div>
<div class="sw" style="left:791.2px;background:#403c5c;color:#fff">19</div>
<div class="sw" style="left:837.9px;background:#516a8a;color:#fff">20</div>
<div class="sw" style="left:884.6px;background:#0079c1;color:#fff">21</div>
<div class="sw" style="left:931.2px;background:#6cc0f0;color:#1a1a1a">22</div>
<div class="sw" style="left:977.9px;background:#8fb0c8;color:#fbeef2">23</div>
<div class="sw" style="left:1024.6px;background:#6a8496;color:#fff">24</div>
<div class="sw" style="left:1071.2px;background:#4d5866;color:#fff">25</div>
<div class="sw" style="left:1117.9px;background:#35917e;color:#fff">26</div>
<div class="sw" style="left:1164.6px;background:#2fb0c0;color:#fff">27</div>
<div class="t" style="left:841px;top:1180px;font-size:16px;color:#2a2a2a">W</div>
<div class="t" style="left:870px;top:1180px;font-size:16px;color:#2a2a2a;letter-spacing:-0.5px">0.0 H</div>
<div class="t" style="left:921px;top:1180px;font-size:16px;color:#2a2a2a;letter-spacing:-0.5px">0.0</div>
<div class="vs" style="left:390px;top:1074px;height:40px"></div>
<div class="vs" style="left:1077px;top:1068px;height:51px;width:2px;background:#b0afad"></div>
<div class="t" style="left:401px;top:1087px;font-size:15px;font-weight:bold;color:#222;letter-spacing:-.2px">Fills:</div>
<svg style="left:0;top:1px" width="1200" height="1200" fill="none" stroke-linejoin="round">
<defs><path id="xl" d="M0 -5 L2.360 -7.010 A3.300 3.300 0 1 1 7.010 -2.360 L5 0 L7.010 2.360 A3.300 3.300 0 1 1 2.360 7.010 L0 5 L-2.360 7.010 A3.300 3.300 0 1 1 -7.010 2.360 L-5 0 L-7.010 -2.360 A3.300 3.300 0 1 1 -2.360 -7.010 Z"/>
<g id="tl"><path d="M0 -9.500 C4.200 -6 4 -2 0 0.500 C-4 -2 -4.200 -6 0 -9.500 Z"/><path d="M0 -9.500 C4.200 -6 4 -2 0 0.500 C-4 -2 -4.200 -6 0 -9.500 Z" transform="rotate(118)"/><path d="M0 -9.500 C4.200 -6 4 -2 0 0.500 C-4 -2 -4.200 -6 0 -9.500 Z" transform="rotate(-118)"/></g></defs>
<rect x="1082" y="1074" width="8" height="40" fill="url(#grip)"/>
<g stroke="#d8412f">
<path d="M-1 1089.500 H3 M-1 1094.500 H3 M-1 1099.500 H3" stroke-width="2.200"/>
<path d="M11.0 1100 L23.0 1090.500 M16.5 1100 L28.5 1090.500 M22.0 1100 L34.0 1090.500 M27.5 1100 L39.5 1090.500 M33.0 1100 L45.0 1090.500 " stroke-width="2.600"/>
<path d="M54.0 1103 L66.0 1086.500 M59.2 1103 L71.2 1086.500 M64.4 1103 L76.4 1086.500 M69.6 1103 L81.6 1086.500 M74.8 1103 L86.8 1086.500 " stroke-width="1.600"/>
<path d="M96 1097.500 L104.500 1089.500 L113 1097.500 L121 1089.500 L129.500 1097.500" stroke-width="2.400" stroke-linejoin="miter"/>
<path d="M138.0 1085 V1101.500 M141.7 1085 V1101.500 M145.4 1085 V1101.500 M149.1 1085 V1101.500 M152.8 1085 V1101.500 M156.5 1085 V1101.500 M160.2 1085 V1101.500 M163.9 1085 V1101.500 M167.6 1085 V1101.500 " stroke-width="1.500"/>
<path d="M181.0 1085 V1100 M184.7 1085 V1100 M188.4 1085 V1100 M192.1 1085 V1100 M195.8 1085 V1100 M199.5 1085 V1100 M203.2 1085 V1100 M206.9 1085 V1100 M210.6 1085 V1100 " stroke-width="1.500"/>
<path d="M222.600 1102.500 V1087.600 H256.500 V1102.500 M239.500 1087.600 V1102.500" stroke-width="1.800"/>
</g>
<path d="M180 1099 V1102 H212.500 V1088" stroke="#444" stroke-width="2.600"/>
<use href="#xl" x="273" y="1094.500" fill="#fff" stroke="#444" stroke-width="1.900"/><use href="#xl" x="290.700" y="1094.500" fill="#fff" stroke="#444" stroke-width="1.900"/>
<g fill="#d8361f"><circle cx="310.300" cy="1094.300" r="4.300"/><circle cx="323.700" cy="1094.300" r="4.300"/><circle cx="337" cy="1094.300" r="4.300"/><use href="#tl" x="356.200" y="1095.800"/><use href="#tl" x="374.600" y="1095.800"/></g>
<g stroke="#a0a0a0">
<clipPath id="c1"><rect x="445" y="1076.500" width="34.500" height="36"/></clipPath>
<g clip-path="url(#c1)"><path d="M406.0 1076.500 L442.0 1112.500 M412.5 1076.500 L448.5 1112.500 M419.0 1076.500 L455.0 1112.500 M425.5 1076.500 L461.5 1112.500 M432.0 1076.500 L468.0 1112.500 M438.5 1076.500 L474.5 1112.500 M445.0 1076.500 L481.0 1112.500 M451.5 1076.500 L487.5 1112.500 M458.0 1076.500 L494.0 1112.500 M464.5 1076.500 L500.5 1112.500 M471.0 1076.500 L507.0 1112.500 M477.5 1076.500 L513.5 1112.500 M484.0 1076.500 L520.0 1112.500 " stroke-width="2.300" stroke-dasharray="6 3" stroke="#a8a8a8"/></g>
<path d="M487.5 1076.500 V1107.500 M492.5 1076.500 V1107.500 M497.5 1076.500 V1107.500 M502.5 1076.500 V1107.500 M507.5 1076.500 V1107.500 M512.5 1076.500 V1107.500 M517.5 1076.500 V1107.500 " stroke-width="2.200"/>
<path d="M530.0 1076.500 V1108 M535.0 1076.500 V1108 M540.0 1076.500 V1108 M545.0 1076.500 V1108 M550.0 1076.500 V1108 M555.0 1076.500 V1108 M560.0 1076.500 V1108 " stroke-width="2.200"/>
<path d="M533 1109.500 H562.500 V1080" stroke-width="3.600" stroke="#909090"/>
<rect x="572.500" y="1078" width="34" height="32.500" fill="#a3a3a3" stroke="none"/>
<clipPath id="c4"><rect x="572.500" y="1078" width="34" height="32.500"/></clipPath>
<g clip-path="url(#c4)"><path d="M572.500 1074.0 L589.500 1066.0 L606.500 1074.0 M572.500 1074.0 L589.500 1082.0 L606.500 1074.0 M572.500 1082.0 L589.500 1074.0 L606.500 1082.0 M572.500 1082.0 L589.500 1090.0 L606.500 1082.0 M572.500 1090.0 L589.500 1082.0 L606.500 1090.0 M572.500 1090.0 L589.500 1098.0 L606.500 1090.0 M572.500 1098.0 L589.500 1090.0 L606.500 1098.0 M572.500 1098.0 L589.500 1106.0 L606.500 1098.0 M572.500 1106.0 L589.500 1098.0 L606.500 1106.0 M572.500 1106.0 L589.500 1114.0 L606.500 1106.0 M572.500 1114.0 L589.500 1106.0 L606.500 1114.0 M572.500 1114.0 L589.500 1122.0 L606.500 1114.0 M572.500 1122.0 L589.500 1114.0 L606.500 1122.0 M572.500 1122.0 L589.500 1130.0 L606.500 1122.0 " stroke="#f5f4f1" stroke-width="1.300"/></g>
<polygon points="647.6,1099.4 641.3,1108.2 631.0,1111.5 620.7,1108.2 614.4,1099.4 614.4,1088.6 620.7,1079.8 631.0,1076.5 641.3,1079.8 647.6,1088.6" fill="#e2e2e2" stroke-width="1.400"/>
<g transform="translate(631 1094)" stroke-width="1.100"><ellipse cx="0" cy="-8" rx="5" ry="7.500" transform="rotate(0)"/><ellipse cx="0" cy="-8" rx="5" ry="7.500" transform="rotate(36)"/><ellipse cx="0" cy="-8" rx="5" ry="7.500" transform="rotate(72)"/><ellipse cx="0" cy="-8" rx="5" ry="7.500" transform="rotate(108)"/><ellipse cx="0" cy="-8" rx="5" ry="7.500" transform="rotate(144)"/><ellipse cx="0" cy="-8" rx="5" ry="7.500" transform="rotate(180)"/><ellipse cx="0" cy="-8" rx="5" ry="7.500" transform="rotate(216)"/><ellipse cx="0" cy="-8" rx="5" ry="7.500" transform="rotate(252)"/><ellipse cx="0" cy="-8" rx="5" ry="7.500" transform="rotate(288)"/><ellipse cx="0" cy="-8" rx="5" ry="7.500" transform="rotate(324)"/><circle r="3" fill="#fff"/></g>
<g stroke-width="1.500"><path id="hrt" d="M673 1110.500 C664 1102 656 1095 656 1086.500 C656 1080.500 660.500 1077 665.500 1077 C669 1077 671.500 1079 673 1082 C674.500 1079 677 1077 680.500 1077 C685.500 1077 690 1080.500 690 1086.500 C690 1095 682 1102 673 1110.500 Z"/><use href="#hrt" transform="translate(673 1091.800) scale(.74) translate(-673 -1092)"/><use href="#hrt" transform="translate(673 1091.300) scale(.5) translate(-673 -1092)" stroke-width="2.200"/></g>
<path d="M702.500 1080 C697 1089 697.500 1099 703 1107.500 M710 1080 C704.500 1089 705 1099 711 1106 C715 1108.500 719 1108.500 722.500 1108 M722 1080 C716.500 1090 718 1101 722.500 1108 M710 1080 H715 M727 1080 C723 1089 724 1098 729 1106.500 M733 1080.500 C730 1090 731 1099 733.500 1106.500 M727 1080 L733 1080.500" stroke-width="1.500"/>
<use href="#xl" x="749" y="1085.3" stroke-width="2" transform="translate(749 1085.3) scale(.86) translate(-749 -1085.3)"/>
<use href="#xl" x="766.8" y="1085.3" stroke-width="2" transform="translate(766.8 1085.3) scale(.86) translate(-766.8 -1085.3)"/>
<use href="#xl" x="749" y="1103" stroke-width="2" transform="translate(749 1103) scale(.86) translate(-749 -1103)"/>
<use href="#xl" x="766.8" y="1103" stroke-width="2" transform="translate(766.8 1103) scale(.86) translate(-766.8 -1103)"/>
</g>
<g fill="#a0a0a0">
<circle cx="787.7" cy="1081.0" r="3.900"/>
<circle cx="800.4" cy="1081.0" r="3.900"/>
<circle cx="813.1" cy="1081.0" r="3.900"/>
<circle cx="787.7" cy="1093.4" r="3.900"/>
<circle cx="800.4" cy="1093.4" r="3.900"/>
<circle cx="813.1" cy="1093.4" r="3.900"/>
<circle cx="787.7" cy="1105.8" r="3.900"/>
<circle cx="800.4" cy="1105.8" r="3.900"/>
<circle cx="813.1" cy="1105.8" r="3.900"/>
<use href="#tl" transform="translate(876.5 1088) scale(.88)"/>
<use href="#tl" transform="translate(894 1088) scale(.88)"/>
<use href="#tl" transform="translate(876.5 1105.5) scale(.88)"/>
<use href="#tl" transform="translate(894 1105.5) scale(.88)"/>
</g>
<g stroke="#a0a0a0" stroke-width="2.400">
<path d="M826.0 1077 V1111 M825 1078.0 H859.500 M834.1 1077 V1111 M825 1086.0 H859.500 M842.2 1077 V1111 M825 1094.0 H859.500 M850.3 1077 V1111 M825 1102.0 H859.500 M858.4 1077 V1111 M825 1110.0 H859.500 "/>
<path d="M912.5 1079.0 l12 12 m0 -12 l-12 12 M931.0 1079.0 l12 12 m0 -12 l-12 12 M912.5 1097.5 l12 12 m0 -12 l-12 12 M931.0 1097.5 l12 12 m0 -12 l-12 12 " stroke-width="2"/>
</g>
<g stroke="#a0a0a0" stroke-width="1.300">
<path d="M953.4 1091.4 C953.2 1089.4 953.5 1084.8 954.6 1082.4 C955.6 1080.0 958.0 1077.2 959.6 1077.0 C961.3 1076.8 963.3 1079.2 964.3 1081.2 C965.4 1083.3 965.4 1087.6 966.1 1089.1 C966.9 1090.7 968.0 1091.7 968.8 1090.5 C969.7 1089.3 969.8 1084.0 971.1 1081.8 C972.4 1079.6 974.6 1077.6 976.5 1077.3 C978.4 1077.1 981.2 1078.4 982.7 1080.3 C984.2 1082.3 985.3 1086.7 985.5 1089.1 C985.7 1091.6 984.9 1094.1 984.1 1095.0 C983.4 1095.8 981.9 1093.5 981.2 1094.3 C980.5 1095.0 979.8 1097.3 980.1 1099.5 C980.4 1101.6 982.5 1105.2 983.2 1107.1 C984.0 1109.0 985.1 1110.4 984.4 1110.7 C983.6 1111.0 980.2 1109.5 978.7 1108.9 C977.2 1108.3 976.3 1107.0 975.4 1107.1 C974.4 1107.2 973.8 1110.2 973.1 1109.6 C972.4 1109.0 971.8 1104.2 971.1 1103.7 C970.4 1103.3 970.0 1106.3 968.8 1107.1 C967.7 1108.0 966.0 1108.5 964.1 1108.9 C962.2 1109.3 959.1 1109.7 957.4 1109.6 C955.7 1109.5 954.3 1109.2 954.0 1108.2 C953.7 1107.3 954.7 1104.7 955.7 1103.7 C956.6 1102.8 959.2 1103.7 959.6 1102.4 C960.1 1101.1 959.1 1097.5 958.5 1096.1 C957.9 1094.7 956.9 1095.0 956.0 1094.2 C955.2 1093.4 953.7 1093.3 953.4 1091.4 Z"/>
<path d="M959.4 1083.3 C959.5 1084.6 959.5 1089.1 960.2 1091.4 C960.9 1093.7 963.1 1095.0 963.6 1097.0 C964.0 1099.0 962.1 1102.5 962.8 1103.3 C963.4 1104.1 966.0 1103.1 967.5 1101.7 C969.0 1100.3 970.5 1097.3 972.0 1095.0 C973.5 1092.7 975.6 1089.9 976.7 1088.0 C977.8 1086.0 978.2 1084.1 978.5 1083.3 "/>
<path d="M978.7 1092.5 C978.5 1093.4 977.2 1096.2 977.1 1098.1 C977.0 1100.0 978.0 1102.8 978.2 1103.7 "/>
<path d="M994.8 1091.5 C994.6 1090.4 995.3 1088.7 995.6 1087.1 C995.9 1085.4 996.3 1082.6 996.7 1081.5 C997.1 1080.4 997.2 1081.2 998.0 1080.4 C998.7 1079.5 999.8 1076.7 1001.0 1076.4 C1002.1 1076.2 1003.9 1078.3 1004.8 1079.1 C1005.8 1079.8 1006.5 1080.3 1006.9 1081.2 C1007.3 1082.1 1007.1 1083.0 1007.4 1084.5 C1007.6 1085.9 1007.9 1088.9 1008.3 1089.9 C1008.6 1090.8 1008.9 1090.3 1009.4 1090.3 C1009.9 1090.2 1010.5 1090.2 1011.0 1089.6 C1011.5 1088.9 1012.1 1087.8 1012.3 1086.3 C1012.6 1084.9 1011.9 1082.0 1012.5 1080.9 C1013.2 1079.7 1015.3 1080.0 1016.4 1079.5 C1017.4 1079.0 1017.9 1078.0 1018.8 1078.1 C1019.7 1078.1 1020.9 1079.2 1021.9 1079.7 C1022.8 1080.2 1023.7 1080.0 1024.3 1081.0 C1025.0 1081.9 1025.2 1084.4 1025.8 1085.6 C1026.5 1086.8 1028.1 1087.3 1028.1 1088.3 C1028.1 1089.3 1026.1 1090.4 1025.9 1091.5 C1025.7 1092.6 1027.1 1094.4 1026.9 1094.8 C1026.7 1095.3 1025.4 1094.4 1024.8 1094.2 C1024.1 1094.1 1023.5 1093.6 1023.1 1094.1 C1022.6 1094.5 1022.4 1096.0 1022.2 1097.1 C1022.0 1098.1 1021.8 1099.1 1022.1 1100.3 C1022.4 1101.5 1023.3 1102.9 1023.9 1104.2 C1024.5 1105.5 1025.5 1107.4 1025.8 1108.1 C1026.2 1108.8 1025.8 1107.6 1026.0 1108.2 C1026.2 1108.8 1027.2 1111.4 1026.9 1111.7 C1026.6 1111.9 1025.2 1110.5 1024.2 1110.0 C1023.2 1109.4 1021.8 1108.6 1021.0 1108.3 C1020.2 1108.0 1020.3 1108.5 1019.6 1108.2 C1018.9 1107.8 1017.2 1106.0 1016.8 1106.2 C1016.3 1106.4 1017.2 1108.7 1016.8 1109.3 C1016.4 1110.0 1014.6 1110.8 1014.1 1110.2 C1013.6 1109.6 1014.0 1106.9 1013.8 1106.0 C1013.5 1105.0 1012.7 1104.5 1012.5 1104.3 C1012.3 1104.0 1012.8 1104.2 1012.6 1104.5 C1012.3 1104.8 1011.6 1105.7 1010.9 1106.2 C1010.3 1106.7 1009.5 1107.1 1008.8 1107.7 C1008.1 1108.3 1007.8 1109.5 1006.7 1109.9 C1005.7 1110.3 1003.9 1110.5 1002.6 1110.3 C1001.3 1110.1 999.6 1109.1 998.8 1108.7 C998.0 1108.4 998.3 1108.1 997.7 1108.0 C997.1 1107.9 995.4 1108.5 995.2 1108.1 C995.1 1107.6 996.7 1105.9 996.9 1105.3 C997.1 1104.7 996.2 1104.7 996.6 1104.5 C997.0 1104.3 998.2 1104.4 999.1 1104.0 C1000.1 1103.6 1002.0 1102.9 1002.3 1102.1 C1002.6 1101.4 1001.1 1100.3 1000.8 1099.3 C1000.6 1098.3 1000.9 1096.9 1000.6 1096.3 C1000.4 1095.6 999.5 1095.7 999.2 1095.4 C998.9 1095.0 999.2 1094.6 998.8 1094.2 C998.3 1093.8 997.1 1093.7 996.4 1093.2 C995.8 1092.8 994.9 1092.5 994.8 1091.5 Z"/>
<path d="M1001.5 1083.7 C1001.6 1084.4 1002.0 1086.7 1002.2 1088.1 C1002.3 1089.5 1002.3 1091.1 1002.5 1092.1 C1002.6 1093.1 1002.2 1093.3 1002.9 1094.1 C1003.5 1095.0 1005.7 1096.4 1006.2 1097.3 C1006.7 1098.2 1006.0 1098.5 1005.7 1099.5 C1005.5 1100.4 1004.3 1102.3 1004.6 1102.8 C1004.8 1103.4 1006.4 1102.9 1007.1 1102.6 C1007.7 1102.4 1007.8 1101.8 1008.5 1101.2 C1009.2 1100.6 1010.2 1100.2 1011.2 1099.1 C1012.2 1098.0 1013.4 1095.7 1014.3 1094.4 C1015.2 1093.0 1016.0 1092.0 1016.7 1090.8 C1017.5 1089.7 1018.5 1088.1 1018.8 1087.3 C1019.1 1086.6 1018.4 1087.1 1018.6 1086.3 C1018.7 1085.5 1019.6 1083.4 1019.8 1082.8 "/>
<path d="M1020.6 1092.5 C1020.3 1093.4 1019.0 1096.2 1018.9 1098.1 C1018.8 1100.0 1019.8 1102.8 1020.0 1103.7 "/>
<ellipse cx="1011.9" cy="1089.1" rx="1.8" ry="2.6" fill="#b5b5b5" stroke="none"/>
<ellipse cx="1016.4" cy="1099.8" rx="1.8" ry="2.4" fill="#b5b5b5" stroke="none"/>
<path d="M1039.0 1091.5 C1039.1 1090.8 1040.6 1089.3 1040.8 1088.3 C1040.9 1087.3 1040.2 1086.6 1039.9 1085.6 C1039.7 1084.7 1039.0 1083.1 1039.4 1082.4 C1039.8 1081.7 1041.8 1082.1 1042.3 1081.4 C1042.9 1080.7 1042.2 1078.8 1042.5 1078.2 C1042.8 1077.6 1043.3 1078.1 1044.1 1077.9 C1045.0 1077.7 1046.5 1076.5 1047.5 1077.1 C1048.4 1077.6 1049.4 1080.4 1049.9 1081.2 C1050.4 1081.9 1050.6 1081.4 1050.5 1081.6 C1050.5 1081.8 1049.5 1081.9 1049.7 1082.5 C1049.8 1083.1 1051.1 1084.2 1051.3 1085.2 C1051.6 1086.2 1050.9 1087.7 1051.0 1088.4 C1051.0 1089.1 1051.0 1089.0 1051.4 1089.5 C1051.8 1089.9 1052.9 1090.8 1053.5 1091.0 C1054.0 1091.3 1054.3 1091.4 1054.6 1090.9 C1054.9 1090.4 1055.1 1089.2 1055.3 1088.1 C1055.5 1086.9 1055.4 1084.8 1055.9 1084.0 C1056.4 1083.2 1057.7 1083.8 1058.3 1083.3 C1058.9 1082.7 1059.3 1081.8 1059.6 1080.9 C1059.9 1080.0 1059.5 1078.8 1059.9 1078.0 C1060.2 1077.2 1060.7 1076.1 1061.6 1076.1 C1062.5 1076.1 1064.1 1077.5 1065.1 1078.0 C1066.0 1078.5 1066.6 1078.4 1067.3 1079.0 C1068.1 1079.6 1069.6 1080.8 1069.7 1081.4 C1069.8 1081.9 1067.6 1081.6 1067.9 1082.4 C1068.2 1083.2 1070.7 1085.0 1071.5 1086.1 C1072.3 1087.2 1072.9 1087.9 1072.6 1088.8 C1072.3 1089.7 1069.8 1090.9 1069.5 1091.5 C1069.3 1092.0 1071.3 1091.8 1071.1 1092.3 C1071.0 1092.9 1068.8 1094.0 1068.7 1094.5 C1068.5 1095.0 1070.6 1095.6 1070.2 1095.5 C1069.9 1095.4 1067.5 1094.2 1066.8 1093.8 C1066.0 1093.4 1065.7 1092.8 1065.8 1093.0 C1065.9 1093.2 1067.3 1094.3 1067.4 1095.1 C1067.5 1095.8 1066.8 1096.7 1066.4 1097.6 C1065.9 1098.4 1065.0 1099.3 1064.9 1100.1 C1064.8 1101.0 1065.5 1101.7 1065.8 1102.4 C1066.1 1103.1 1066.4 1103.7 1066.8 1104.3 C1067.2 1105.0 1067.5 1105.6 1068.1 1106.4 C1068.8 1107.3 1070.5 1108.5 1070.7 1109.2 C1070.9 1109.9 1069.4 1110.4 1069.1 1110.6 C1068.9 1110.8 1069.2 1110.4 1069.2 1110.4 C1069.3 1110.4 1069.9 1110.4 1069.2 1110.5 C1068.6 1110.6 1066.1 1111.3 1065.2 1111.0 C1064.2 1110.6 1063.8 1108.7 1063.6 1108.2 C1063.4 1107.7 1064.5 1108.1 1064.1 1107.8 C1063.8 1107.5 1062.3 1106.5 1061.6 1106.5 C1060.9 1106.4 1060.2 1107.1 1059.9 1107.4 C1059.5 1107.7 1059.7 1108.0 1059.6 1108.2 C1059.5 1108.5 1059.1 1108.4 1059.2 1108.6 C1059.3 1108.9 1060.3 1109.5 1060.2 1109.5 C1060.0 1109.6 1059.0 1109.5 1058.4 1108.7 C1057.8 1107.9 1056.6 1105.4 1056.6 1104.7 C1056.5 1104.0 1058.2 1104.8 1058.0 1104.7 C1057.8 1104.6 1055.7 1103.5 1055.3 1104.0 C1055.0 1104.4 1056.3 1106.5 1056.0 1107.3 C1055.7 1108.0 1054.0 1108.3 1053.7 1108.4 C1053.4 1108.6 1054.5 1108.2 1054.1 1108.0 C1053.7 1107.8 1052.1 1106.8 1051.2 1107.2 C1050.2 1107.5 1049.2 1109.8 1048.5 1110.3 C1047.8 1110.7 1047.5 1109.7 1046.8 1109.7 C1046.2 1109.8 1045.2 1110.4 1044.6 1110.3 C1044.1 1110.2 1044.0 1109.1 1043.4 1109.0 C1042.8 1108.9 1041.6 1110.0 1041.0 1109.8 C1040.4 1109.6 1039.8 1108.0 1039.6 1107.9 C1039.4 1107.8 1039.7 1109.6 1039.9 1109.3 C1040.1 1109.0 1040.2 1106.9 1040.6 1106.1 C1041.0 1105.3 1042.2 1104.9 1042.1 1104.4 C1042.0 1103.9 1039.9 1103.5 1040.0 1103.1 C1040.1 1102.7 1042.0 1102.1 1042.6 1102.0 C1043.1 1101.9 1042.6 1102.6 1043.1 1102.5 C1043.6 1102.3 1045.3 1101.5 1045.5 1101.3 C1045.8 1101.1 1044.5 1101.9 1044.6 1101.4 C1044.6 1101.0 1046.0 1099.5 1046.0 1098.7 C1046.0 1097.8 1045.4 1097.1 1044.8 1096.3 C1044.2 1095.6 1042.9 1094.2 1042.3 1094.1 C1041.7 1094.0 1041.2 1095.8 1041.2 1096.0 C1041.2 1096.3 1042.6 1095.9 1042.3 1095.5 C1042.0 1095.1 1039.9 1094.1 1039.5 1093.6 C1039.1 1093.2 1040.0 1093.3 1040.0 1093.0 C1039.9 1092.6 1038.9 1092.3 1039.0 1091.5 Z"/>
<path d="M1044.5 1083.8 C1044.7 1084.3 1045.8 1086.2 1045.9 1086.9 C1045.9 1087.6 1044.9 1087.3 1044.8 1087.9 C1044.6 1088.6 1044.5 1089.9 1044.9 1090.6 C1045.4 1091.3 1047.1 1091.6 1047.7 1092.2 C1048.2 1092.9 1048.1 1093.6 1048.2 1094.3 C1048.4 1095.1 1048.4 1096.0 1048.7 1096.8 C1049.0 1097.7 1050.1 1098.8 1049.9 1099.4 C1049.7 1100.0 1047.8 1099.8 1047.4 1100.6 C1047.0 1101.4 1047.0 1103.8 1047.5 1104.3 C1048.1 1104.8 1050.1 1103.8 1050.9 1103.6 C1051.7 1103.4 1051.9 1103.1 1052.5 1102.9 C1053.1 1102.7 1054.2 1102.9 1054.4 1102.5 C1054.7 1102.1 1053.8 1101.2 1054.1 1100.4 C1054.3 1099.6 1055.5 1098.8 1056.2 1097.9 C1056.8 1097.0 1057.4 1095.7 1057.9 1094.8 C1058.3 1093.9 1058.5 1093.4 1058.9 1092.5 C1059.3 1091.5 1059.6 1089.9 1060.4 1089.3 C1061.1 1088.7 1062.6 1089.2 1063.3 1088.8 C1064.0 1088.4 1064.3 1087.5 1064.3 1086.9 C1064.4 1086.4 1064.0 1086.1 1063.8 1085.5 C1063.6 1085.0 1063.3 1084.0 1063.2 1083.8 "/>
<path d="M1045.4 1086.6 C1045.6 1087.1 1047.7 1088.0 1048.5 1089.3 C1049.2 1090.6 1049.3 1093.3 1049.8 1094.5 C1050.3 1095.8 1051.6 1096.1 1051.4 1097.1 C1051.2 1098.0 1048.9 1099.5 1048.6 1100.4 C1048.2 1101.4 1049.5 1101.9 1049.4 1102.7 C1049.2 1103.5 1047.1 1104.9 1047.6 1105.5 C1048.1 1106.1 1051.1 1106.4 1052.3 1106.4 C1053.5 1106.5 1053.9 1106.2 1054.8 1105.8 C1055.7 1105.5 1056.5 1105.5 1057.7 1104.6 C1058.8 1103.6 1060.8 1101.2 1061.7 1100.2 C1062.6 1099.2 1062.5 1099.5 1063.1 1098.7 C1063.8 1097.8 1065.4 1095.9 1065.7 1095.1 C1066.0 1094.3 1065.0 1094.9 1064.9 1093.9 C1064.9 1092.9 1065.7 1090.3 1065.6 1089.4 C1065.5 1088.4 1065.0 1088.4 1064.5 1088.1 C1063.9 1087.7 1063.2 1087.8 1062.1 1087.5 C1061.0 1087.2 1058.8 1086.5 1057.9 1086.2 C1056.9 1085.9 1057.5 1086.0 1056.3 1085.8 C1055.1 1085.5 1052.3 1084.6 1050.8 1084.7 C1049.3 1084.7 1048.4 1085.7 1047.5 1086.1 C1046.6 1086.4 1045.2 1086.0 1045.4 1086.6 Z"/>
</g>
<g stroke="#9a9a9a" stroke-width="3">
<path d="M1110.500 1077 V1111 M1120.500 1077 V1111 M1097 1111 L1110 1096" />
<path d="M1100 1078.500 H1130 M1098 1092 H1130 M1106 1101 H1130 M1098 1110 H1130" stroke-width="2.200"/>
<path d="M1140 1079 L1168 1077.500 L1140 1086.500 L1168 1087 L1140 1095.500 L1168 1097 L1140 1104.500 L1168 1106 L1139 1110.500 H1170" stroke-width="2.200" stroke-linejoin="miter"/>
<path d="M1182 1111 L1196 1078 L1200 1080 M1187 1110 L1200 1082 M1182 1111 H1190" stroke-width="2"/>
</g>
</svg>

</body></html>
